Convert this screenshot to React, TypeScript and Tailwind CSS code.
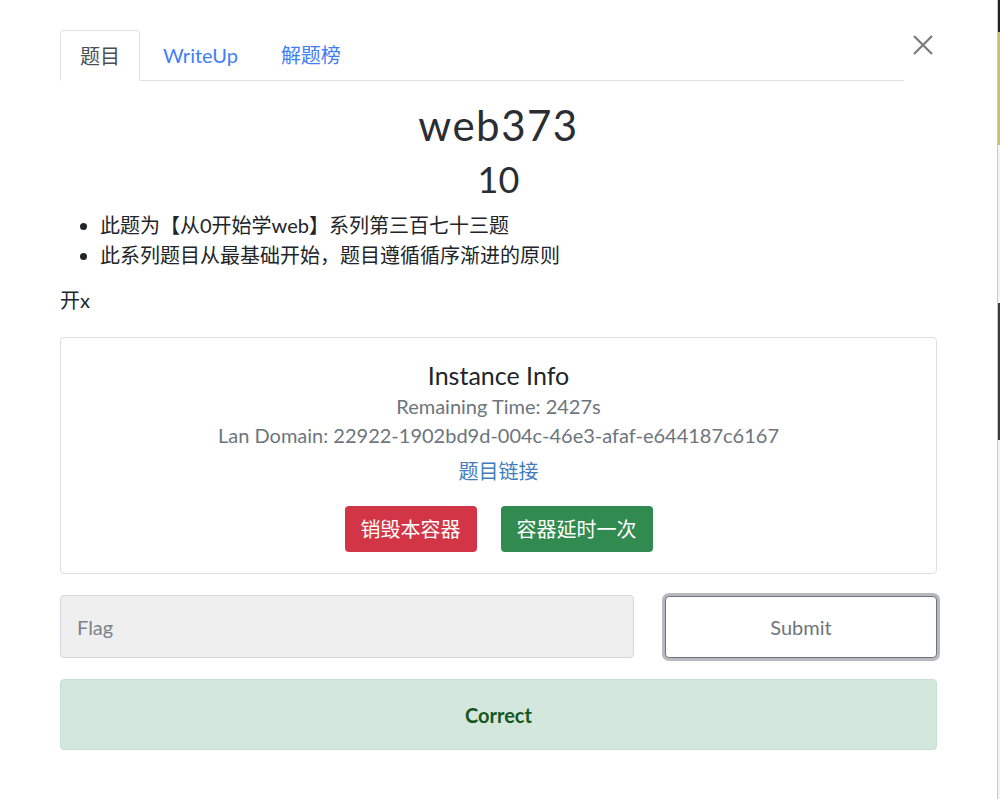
import { useState } from "react";

const font = { fontFamily: 'Lato, "Noto Sans CJK SC", sans-serif' };

export default function App() {
  const [flag, setFlag] = useState("");

  return (
    <div className="flex h-[799px] w-[1000px] overflow-hidden bg-white" style={font}>
      {/* Modal */}
      <div className="flex h-full w-[998px] flex-col border-r border-[#c8c8c8] bg-white px-[60px] pt-[30px] text-[#212529]">
        {/* Tabs + close */}
        <div className="flex items-start">
          <ul className="flex flex-1 border-b border-[#dee2e6] text-[20px]">
            <li className="-mb-px flex h-[51px] items-center rounded-t border border-b-white border-[#dee2e6] bg-white px-[19px] text-[#495057]">
              题目
            </li>
            <li className="flex h-[50px] items-center px-[23px] text-[#3e7ef7]">WriteUp</li>
            <li className="flex h-[50px] items-center px-[20px] text-[#3e7ef7]">解题榜</li>
          </ul>
          <button className="ml-[4px] flex h-[28px] w-[29px] items-center justify-center pt-[2px] text-[#7a7a7a]">
            <svg width="22" height="22" viewBox="0 0 22 22" fill="none" stroke="currentColor" strokeWidth="2.2">
              <path d="M2 2 L20 20 M20 2 L2 20" />
            </svg>
          </button>
        </div>

        {/* Title */}
        <h3 className="mt-[19px] text-center text-[42px] leading-[50px] tracking-[1.5px] text-[#2a2e33]">web373</h3>
        <h4 className="mt-[8px] text-center text-[36px] leading-[42px] text-[#2a2e33]">10</h4>

        {/* Description */}
        <ul className="mt-[10px] list-disc pl-[40px] text-[20px] leading-[30px]">
          <li>此题为【从0开始学web】系列第三百七十三题</li>
          <li>此系列题目从最基础开始，题目遵循循序渐进的原则</li>
        </ul>
        <p className="mt-[17px] text-[20px] leading-[27px]">开x</p>

        {/* Instance card */}
        <div className="mt-[23px] flex flex-col items-center rounded border border-[#dfdfdf] pb-[21px] pt-[21px]">
          <h5 className="text-[25px] leading-[32px]">Instance Info</h5>
          <p className="mt-[1px] text-[20px] leading-[29px] text-[#6c757d]">Remaining Time: 2427s</p>
          <p className="text-[20px] leading-[29px] text-[#6c757d]">Lan Domain: 22922-1902bd9d-004c-46e3-afaf-e644187c6167</p>
          <a className="mt-[7px] text-[20px] leading-[29px] text-[#3f7cc0]">题目链接</a>
          <div className="mt-[20px] flex gap-[24px]">
            <button className="h-[46px] rounded bg-[#d23545] px-[16px] text-[20px] text-white">销毁本容器</button>
            <button className="h-[46px] rounded bg-[#318a4f] px-[16px] text-[20px] text-white">容器延时一次</button>
          </div>
        </div>

        {/* Flag row */}
        <div className="mt-[21px] flex items-center">
          <input
            value={flag}
            onChange={(e) => setFlag(e.target.value)}
            placeholder="Flag"
            className="h-[63px] w-[574px] rounded border border-[#d3d6da] bg-[#efefef] px-[16px] text-[20px] text-[#495057] outline-none placeholder:text-[#7b8288]"
          />
          <button className="ml-[31px] flex h-[62px] w-[272px] items-center justify-center rounded-[4px] border border-[#6c757d] bg-white text-[20px] text-[#6c757d] ring-[3px] ring-[#b6babf]">
            Submit
          </button>
        </div>

        {/* Result */}
        <div className="mt-[21px] flex h-[71px] items-center justify-center rounded border border-[#c3e1cd] bg-[#d4e7dd] text-[20px] font-bold text-[#155724]">
          Correct
        </div>
      </div>

      {/* Backdrop sliver */}
      <div className="flex w-[2px] flex-col">
        <div className="h-[32px] bg-[#222226]" />
        <div className="h-[113px] bg-[#d8b878]" />
        <div className="h-[158px] bg-[#f4f4f4]" />
        <div className="h-[137px] bg-[#3a3a44]" />
        <div className="flex-1 bg-[#f4f4f4]" />
      </div>
    </div>
  );
}
